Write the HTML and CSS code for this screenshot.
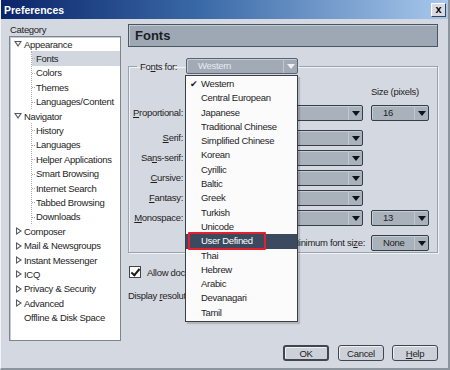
FILE: index.html
```html
<!DOCTYPE html>
<html lang="en">
<head>
  <meta charset="UTF-8" />
  <title>Preferences</title>
  <link rel="stylesheet" href="styles.css">
</head>
<body>
  <div class="window">
    <div class="titlebar">
      <span class="title">Preferences</span>
      <span class="close">x</span>
    </div>

    <div class="main">
      <div class="sidebar">
        <div class="cat-label">Category</div>
        <div class="tree">
          <div class="row"><span class="twisty down"></span>Appearance</div>
          <div class="children">
            <div class="row leaf selected">Fonts</div>
            <div class="row leaf">Colors</div>
            <div class="row leaf">Themes</div>
            <div class="row leaf">Languages/Content</div>
          </div>
          <div class="row"><span class="twisty down"></span>Navigator</div>
          <div class="children">
            <div class="row leaf">History</div>
            <div class="row leaf">Languages</div>
            <div class="row leaf">Helper Applications</div>
            <div class="row leaf">Smart Browsing</div>
            <div class="row leaf">Internet Search</div>
            <div class="row leaf">Tabbed Browsing</div>
            <div class="row leaf">Downloads</div>
          </div>
          <div class="row"><span class="twisty right"></span>Composer</div>
          <div class="row"><span class="twisty right"></span>Mail &amp; Newsgroups</div>
          <div class="row"><span class="twisty right"></span>Instant Messenger</div>
          <div class="row"><span class="twisty right"></span>ICQ</div>
          <div class="row"><span class="twisty right"></span>Privacy &amp; Security</div>
          <div class="row"><span class="twisty right"></span>Advanced</div>
          <div class="row"><span class="twisty"></span>Offline &amp; Disk Space</div>
        </div>
      </div>

      <div class="panel">
        <div class="panel-header">Fonts</div>

        <fieldset class="fonts-group">
          <legend>
            <div class="legend-inner">
              <span class="legend-label">Fo<u>n</u>ts for:</span>
              <div class="select disabled wide">
                <span class="value">Western</span><span class="arrow"></span>
                <div class="dropdown">
                  <div class="item checked">Western</div>
                  <div class="item">Central European</div>
                  <div class="item">Japanese</div>
                  <div class="item">Traditional Chinese</div>
                  <div class="item">Simplified Chinese</div>
                  <div class="item">Korean</div>
                  <div class="item">Cyrillic</div>
                  <div class="item">Baltic</div>
                  <div class="item">Greek</div>
                  <div class="item">Turkish</div>
                  <div class="item">Unicode</div>
                  <div class="item active"><span class="mark"></span>User Defined</div>
                  <div class="item">Thai</div>
                  <div class="item">Hebrew</div>
                  <div class="item">Arabic</div>
                  <div class="item">Devanagari</div>
                  <div class="item">Tamil</div>
                </div>
              </div>
            </div>
          </legend>

          <div class="font-grid">
            <span></span><span></span><span class="size-head">Size (pixels)</span>

            <span class="label"><u>P</u>roportional:</span>
            <div class="select face"><span class="value"></span><span class="arrow"></span></div>
            <div class="select"><span class="value">16</span><span class="arrow"></span></div>

            <span class="label spaced"><u>S</u>erif:</span>
            <div class="select face spaced"><span class="value"></span><span class="arrow"></span></div>
            <span class="spaced"></span>

            <span class="label">Sa<u>n</u>s-serif:</span>
            <div class="select face"><span class="value"></span><span class="arrow"></span></div>
            <span></span>

            <span class="label"><u>C</u>ursive:</span>
            <div class="select face"><span class="value"></span><span class="arrow"></span></div>
            <span></span>

            <span class="label"><u>F</u>antasy:</span>
            <div class="select face"><span class="value"></span><span class="arrow"></span></div>
            <span></span>

            <span class="label"><u>M</u>onospace:</span>
            <div class="select face"><span class="value"></span><span class="arrow"></span></div>
            <div class="select"><span class="value">13</span><span class="arrow"></span></div>

            <span class="label min-label spaced">Minimum font si<u>z</u>e:</span>
            <div class="select spaced"><span class="value">None</span><span class="arrow"></span></div>
          </div>
        </fieldset>

        <div class="check-row">
          <span class="checkbox"></span>
          <span>Allow documents to use other fonts</span>
        </div>
        <div class="resolution">Display <u>r</u>esolution:</div>

        <div class="buttons">
          <button class="btn default">OK</button>
          <button class="btn">Cancel</button>
          <button class="btn"><u>H</u>elp</button>
        </div>
      </div>
    </div>
  </div>
</body>
</html>
```

FILE: styles.css
```css
* {
  box-sizing: border-box;
}

body {
  margin: 0;
  font-family: 'Liberation Sans', Arial, sans-serif;
  font-size: 9.5px;
  letter-spacing: -0.3px;
  color: #1e1e1e;
}

.window {
  width: 450px;
  height: 370px;
  background: #d4d8e0;
  border-left: 1px solid #f2f4f7;
  border-right: 2px solid #8c949e;
  border-bottom: 2px solid #8c949e;
  display: flex;
  flex-direction: column;
}

/* title bar */
.titlebar {
  height: 19px;
  background: linear-gradient(to right, #0a246a, #3b6aa8 45%, #a8c8ec);
  display: flex;
  align-items: center;
  justify-content: space-between;
  padding: 0 2px 0 3px;
}

.title {
  color: #ffffff;
  font-weight: bold;
  font-size: 10.5px;
  letter-spacing: 0;
}

.close {
  width: 15px;
  height: 14px;
  background: #d8dce2;
  border: 1px solid;
  border-color: #ffffff #404448 #404448 #ffffff;
  font-weight: bold;
  font-size: 11px;
  line-height: 10px;
  text-align: center;
  color: #000;
}

.main {
  flex: 1;
  display: flex;
  gap: 7px;
  padding: 5px 10px 7px 8px;
}

/* category tree */
.sidebar {
  width: 112px;
  display: flex;
  flex-direction: column;
}

.cat-label {
  height: 12px;
  line-height: 11px;
  padding-left: 1px;
}

.tree {
  height: 305px;
  background: #ffffff;
  border: 1px solid #7c8690;
  box-shadow: inset 1px 1px 0 #c8ccd2;
}

.row {
  height: 14.4px;
  display: flex;
  align-items: center;
  white-space: nowrap;
}

.twisty {
  width: 8px;
  height: 8px;
  margin: 0 2px 0 4px;
  position: relative;
}

.twisty.down::before {
  content: '';
  position: absolute;
  left: 0;
  top: 1px;
  border-left: 4px solid transparent;
  border-right: 4px solid transparent;
  border-top: 6px solid #555b62;
}

.twisty.down::after {
  content: '';
  position: absolute;
  left: 2px;
  top: 2px;
  border-left: 2px solid transparent;
  border-right: 2px solid transparent;
  border-top: 3px solid #ffffff;
}

.twisty.right::before {
  content: '';
  position: absolute;
  left: 2px;
  top: 0;
  border-top: 4px solid transparent;
  border-bottom: 4px solid transparent;
  border-left: 6px solid #555b62;
}

.twisty.right::after {
  content: '';
  position: absolute;
  left: 3px;
  top: 2px;
  border-top: 2px solid transparent;
  border-bottom: 2px solid transparent;
  border-left: 3px solid #ffffff;
}

.children {
  margin-left: 21px;
  border-left: 1px dotted #a8acb2;
}

.leaf {
  padding-left: 4px;
  position: relative;
}

.leaf::before {
  content: '';
  position: absolute;
  left: 0;
  top: 7px;
  width: 3px;
  border-top: 1px dotted #a8acb2;
}

.leaf.selected {
  background: #d2d6de;
}

/* right panel */
.panel {
  flex: 1;
  display: flex;
  flex-direction: column;
}

.panel-header {
  height: 23px;
  background: #9ea8b4;
  border: 1px solid #4c5660;
  box-shadow: inset 1px 1px 0 #c4cad2;
  font-weight: bold;
  font-size: 13px;
  letter-spacing: 0;
  line-height: 21px;
  padding-left: 6px;
  color: #1a1e24;
}

.fonts-group {
  margin: 11px 0 0 0;
  padding: 0 0 1px 0;
  border: 1px solid #9aa2ac;
  box-shadow: 1px 1px 0 #f0f2f5, inset 1px 1px 0 #f0f2f5;
  min-width: 0;
}

.fonts-group legend {
  margin-left: 8px;
  padding: 0 1px 0 3px;
}

.legend-inner {
  display: flex;
  align-items: center;
  height: 16px;
}

.legend-label {
  width: 46px;
}

/* selects */
.select {
  height: 16px;
  background: #a9b1bb;
  border: 1px solid #363e46;
  border-radius: 2px;
  box-shadow: inset 1px 1px 0 #c6ccd4;
  display: flex;
  position: relative;
}

.select .value {
  flex: 1;
  padding-left: 11px;
  line-height: 14px;
}

.select .arrow {
  width: 14px;
  border-left: 1px solid #c2c8d0;
  display: flex;
  align-items: center;
  justify-content: center;
}

.select .arrow::after {
  content: '';
  border-left: 4px solid transparent;
  border-right: 4px solid transparent;
  border-top: 5px solid #101418;
}

.select.wide {
  width: 112px;
}

.select.disabled {
  background: #a2aab6;
  border-color: #5a646e;
  color: #e6eaf0;
}

.select.disabled .arrow::after {
  border-top-color: #eef0f4;
}

/* open list, drawn over the rows below it */
.dropdown {
  position: absolute;
  left: -2px;
  top: 16px;
  width: 113px;
  padding-top: 1px;
  padding-bottom: 1px;
  background: #fbfbfc;
  border: 1px solid #3a3e44;
  box-shadow: 2px 2px 1px rgba(0, 0, 0, 0.15);
  color: #1e1e1e;
  z-index: 5;
}

.item {
  height: 14.3px;
  line-height: 14.3px;
  padding-left: 15px;
  position: relative;
  white-space: nowrap;
}

.item.checked::before {
  content: '\2714';
  position: absolute;
  left: 4px;
  font-size: 9px;
}

.item.active {
  background: #3c4a5f;
  color: #ffffff;
}

.item .mark {
  position: absolute;
  left: 2px;
  top: -2px;
  width: 78px;
  height: 18px;
  border: 2px solid #e4202c;
  border-radius: 1px;
}

/* font rows */
.font-grid {
  display: grid;
  grid-template-columns: 56px 186px 58px;
  row-gap: 4px;
  padding-top: 12px;
}

.size-head {
  height: 13px;
  margin-bottom: 2px;
  white-space: nowrap;
}

.label {
  text-align: right;
  line-height: 16px;
  padding-right: 2px;
  white-space: nowrap;
}

.select.face {
  margin-right: 8px;
}

.spaced {
  margin-top: 5px;
}

.min-label {
  grid-column: 1 / 3;
  padding-right: 6px;
}

/* bottom */
.check-row {
  display: flex;
  align-items: center;
  gap: 6px;
  margin-top: 13px;
  padding-left: 1px;
  height: 12px;
  white-space: nowrap;
}

.checkbox {
  flex: none;
  width: 12px;
  height: 12px;
  background: #ffffff;
  border: 1px solid #3e4650;
  position: relative;
}

.checkbox::after {
  content: '';
  position: absolute;
  left: 3px;
  top: 0;
  width: 3px;
  height: 7px;
  border-right: 2px solid #1a1a1a;
  border-bottom: 2px solid #1a1a1a;
  transform: rotate(40deg);
}

.resolution {
  margin-top: 12px;
  white-space: nowrap;
}

.buttons {
  margin-top: auto;
  display: flex;
  justify-content: flex-end;
  gap: 8px;
}

.btn {
  width: 46px;
  height: 16px;
  padding: 0;
  font-family: inherit;
  font-size: 9.5px;
  letter-spacing: -0.3px;
  color: #1e1e1e;
  background: #ccd0d8;
  border: 1px solid #3e4650;
  border-radius: 3px;
  box-shadow: inset 1px 1px 0 #eef0f3;
}

.btn.default {
  border-width: 2px;
  margin-right: 1px;
}
```
